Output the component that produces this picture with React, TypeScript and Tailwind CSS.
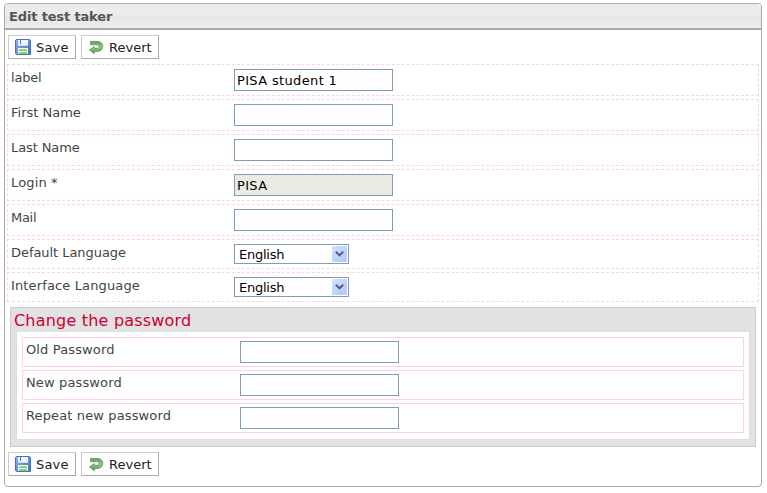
import React from "react";

function SaveIcon() {
  return (
    <svg width="16" height="16" viewBox="0 0 16 16" className="shrink-0">
      <defs>
        <linearGradient id="disk" x1="0" y1="0" x2="1" y2="1">
          <stop offset="0" stopColor="#8db6ee" />
          <stop offset="1" stopColor="#3a70c2" />
        </linearGradient>
      </defs>
      <path d="M1.500 .5h13l1 1v14H1.500l-1-1v-13z" fill="url(#disk)" stroke="#4273bd" />
      <rect x="3" y="1" width="10" height="6" fill="#eef4fd" />
      <rect x="5" y="1" width="1" height="4" fill="#4a7cc8" />
      <rect x="3" y="6" width="10" height="1" fill="#c9dbf5" />
      <rect x="3" y="9" width="10" height="6" fill="#f4f9f0" />
      <rect x="4" y="10" width="8" height="1" fill="#a5d58f" />
      <rect x="4" y="11" width="8" height="1" fill="#83c765" />
      <rect x="4" y="13" width="8" height="2" fill="#8ccb6f" />
    </svg>
  );
}

function RevertIcon() {
  return (
    <svg width="16" height="16" viewBox="0 0 16 16" className="shrink-0">
      <defs>
        <linearGradient id="turn" x1="0" y1="0" x2="0" y2="1">
          <stop offset="0" stopColor="#5c9f5a" />
          <stop offset=".45" stopColor="#92cc8d" />
          <stop offset="1" stopColor="#4a9d46" />
        </linearGradient>
      </defs>
      <path
        d="M2.500 2.400H9c3.700 0 5.800 2.100 5.800 4.900 0 3.200-2.300 5.200-5.800 5.200H6.300v2.200L1.400 10.900 6.300 7.500v1.800H9c1.300 0 2.100-.7 2.100-1.900 0-1.100-.8-1.700-2.100-1.700H2.500z"
        fill="url(#turn)"
        stroke="#4b914a"
        strokeWidth=".7"
        strokeLinejoin="round"
      />
    </svg>
  );
}

function Toolbar() {
  return (
    <div className="flex gap-[5px] pl-[3px]">
      <button className="flex h-6 w-[68px] items-center gap-[5px] border border-t-[#cccccc] border-l-[#cccccc] border-r-[#aaaaaa] border-b-[#aaaaaa] bg-white pl-1.5 text-[13px] text-[#222222]">
        <SaveIcon />
        <span className="pt-0.5 tracking-[0.2px]">Save</span>
      </button>
      <button className="flex h-6 w-[78px] items-center gap-[5px] border border-t-[#cccccc] border-l-[#cccccc] border-r-[#aaaaaa] border-b-[#aaaaaa] bg-white pl-1.5 text-[13px] text-[#222222]">
        <RevertIcon />
        <span className="pt-0.5">Revert</span>
      </button>
    </div>
  );
}

function TextField({ value = "", readOnly = false }: { value?: string; readOnly?: boolean }) {
  return (
    <input
      className={`h-[22px] w-[159px] border border-[#7f9db9] px-0.5 text-[13px] tracking-[0.35px] text-black outline-none ${readOnly ? "bg-[#ebebe4]" : "bg-white"}`}
      defaultValue={value}
      readOnly={readOnly}
    />
  );
}

function LanguageSelect() {
  return (
    <div className="flex h-5 w-[115px] items-center justify-between border border-[#7f9db9] bg-white pr-px pl-1 text-[13px] text-black">
      <span className="pt-0.5 tracking-[-0.25px]">English</span>
      <span className="flex h-4 w-[15px] items-center justify-center rounded-[1px] bg-linear-to-br from-[#d6e1fd] to-[#aec8f7]">
        <svg width="9" height="6" viewBox="0 0 9 6">
          <path d="M.8 .8 4.500 4.300 8.200 .8" fill="none" stroke="#4d6185" strokeWidth="2" />
        </svg>
      </span>
    </div>
  );
}

type RowProps = { label: string; tall?: boolean; spacing?: string; children: React.ReactNode };

function Row({ label, tall = true, spacing = "tracking-normal", children }: RowProps) {
  return (
    <div className={`flex border border-dashed border-[#fcd3e0] pt-1 pl-[3px] ${tall ? "h-8" : "h-[30px]"}`}>
      <label className={`w-[223px] text-[13px] leading-[18px] text-[#444444] ${spacing}`}>{label}</label>
      {children}
    </div>
  );
}

function PasswordRow({ label }: { label: string }) {
  return (
    <div className="flex h-[30px] border border-[#fcd3e0] pt-[3px] pl-[3px]">
      <label className="w-[214px] text-[13px] leading-[18px] tracking-[0.13px] text-[#444444]">{label}</label>
      <TextField />
    </div>
  );
}

export default function App() {
  return (
    <div className="h-[493px] w-[767px] bg-white pt-[3px] pl-1 font-['DejaVu_Sans',Verdana,sans-serif]">
      <div className="flex h-[484px] w-[758px] flex-col overflow-hidden rounded-[4px] border border-[#aaaaaa]">
        <div className="h-[26px] shrink-0 border-b-2 border-[#aaaaaa] bg-[linear-gradient(#ececec_0,#ebebeb_50%,#e4e4e4_50%,#eeeeee_100%)] pl-1 text-[13px] leading-[25px] font-bold tracking-[-0.15px] text-[#555555]">
          Edit test taker
        </div>
        <div className="pt-[5px]">
          <Toolbar />
        </div>
        <div className="mt-[5px] ml-0.5 flex w-[752px] flex-col gap-[3px]">
          <Row label="label" spacing="tracking-[-0.2px]"><TextField value="PISA student 1" /></Row>
          <Row label="First Name"><TextField /></Row>
          <Row label="Last Name" spacing="tracking-[-0.1px]"><TextField /></Row>
          <Row label="Login *" spacing="tracking-[0.15px]"><TextField value="PISA" readOnly /></Row>
          <Row label="Mail" spacing="tracking-[-0.3px]"><TextField /></Row>
          <Row label="Default Language" tall={false} spacing="tracking-[-0.05px]"><LanguageSelect /></Row>
          <Row label="Interface Language" tall={false} spacing="tracking-[0.14px]"><LanguageSelect /></Row>
        </div>
        <div className="mt-[5px] ml-[5px] h-[140px] w-[746px] shrink-0 border border-[#cccccc] bg-[#e2e2e2] px-[5px]">
          <h2 className="-ml-0.5 h-[23px] text-[16px] leading-[26px] tracking-[0.2px] text-[#cc0033]">Change the password</h2>
          <div className="flex h-[109px] w-[734px] flex-col gap-[3px] border border-[#dddddd] bg-white px-[5px] pt-[5px]">
            <PasswordRow label="Old Password" />
            <PasswordRow label="New password" />
            <PasswordRow label="Repeat new password" />
          </div>
        </div>
        <div className="pt-[5px]">
          <Toolbar />
        </div>
      </div>
    </div>
  );
}
